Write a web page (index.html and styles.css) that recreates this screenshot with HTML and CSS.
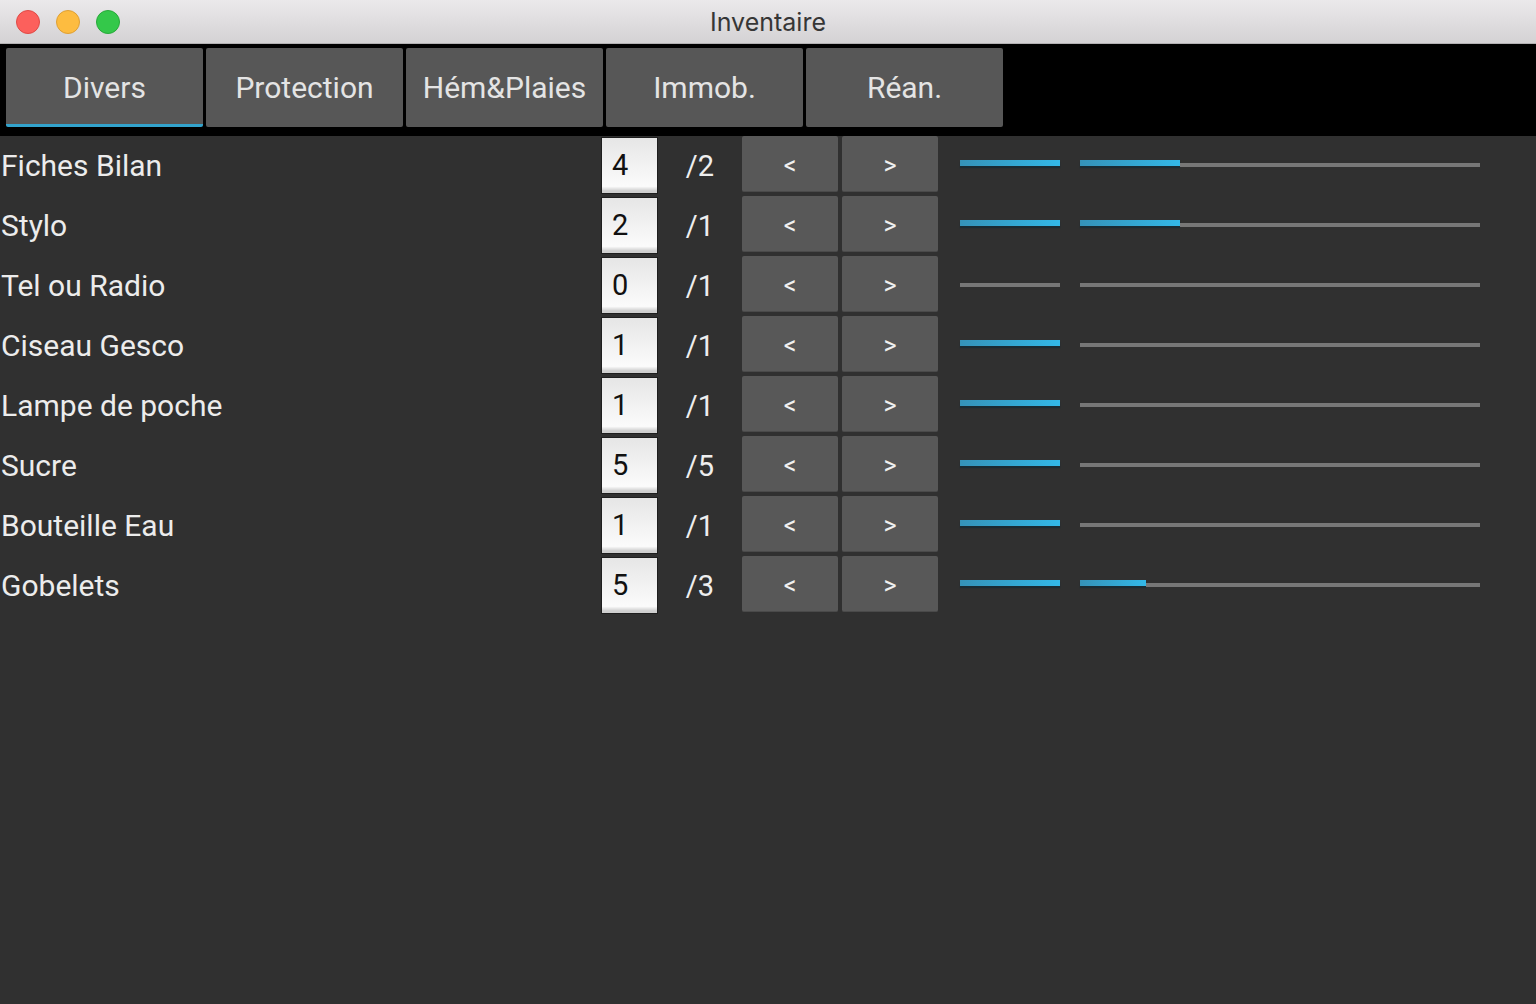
FILE: index.html
```html
<!DOCTYPE html>
<html lang="fr">
<head>
<meta charset="utf-8">
<title>Inventaire</title>
<link rel="stylesheet" href="styles.css">
</head>
<body>
<div class="window">
  <header class="titlebar">
    <div class="lights">
      <span class="light red"></span>
      <span class="light yellow"></span>
      <span class="light green"></span>
    </div>
    <div class="title">Inventaire</div>
  </header>
  <nav class="tabs">
    <div class="tab active">Divers</div>
    <div class="tab">Protection</div>
    <div class="tab">Hém&amp;Plaies</div>
    <div class="tab">Immob.</div>
    <div class="tab">Réan.</div>
  </nav>
  <main class="panel">
    <div class="row">
      <div class="label">Fiches Bilan</div>
      <div class="qty">4</div>
      <div class="max">/2</div>
      <div class="btn">&lt;</div>
      <div class="btn">&gt;</div>
      <div class="slider short"><div class="fill" style="width:100px"></div><div class="rest"></div></div>
      <div class="slider long"><div class="fill" style="width:100px"></div><div class="rest"></div></div>
    </div>
    <div class="row">
      <div class="label">Stylo</div>
      <div class="qty">2</div>
      <div class="max">/1</div>
      <div class="btn">&lt;</div>
      <div class="btn">&gt;</div>
      <div class="slider short"><div class="fill" style="width:100px"></div><div class="rest"></div></div>
      <div class="slider long"><div class="fill" style="width:100px"></div><div class="rest"></div></div>
    </div>
    <div class="row">
      <div class="label">Tel ou Radio</div>
      <div class="qty">0</div>
      <div class="max">/1</div>
      <div class="btn">&lt;</div>
      <div class="btn">&gt;</div>
      <div class="slider short"><div class="fill" style="width:0px"></div><div class="rest"></div></div>
      <div class="slider long"><div class="fill" style="width:0px"></div><div class="rest"></div></div>
    </div>
    <div class="row">
      <div class="label">Ciseau Gesco</div>
      <div class="qty">1</div>
      <div class="max">/1</div>
      <div class="btn">&lt;</div>
      <div class="btn">&gt;</div>
      <div class="slider short"><div class="fill" style="width:100px"></div><div class="rest"></div></div>
      <div class="slider long"><div class="fill" style="width:0px"></div><div class="rest"></div></div>
    </div>
    <div class="row">
      <div class="label">Lampe de poche</div>
      <div class="qty">1</div>
      <div class="max">/1</div>
      <div class="btn">&lt;</div>
      <div class="btn">&gt;</div>
      <div class="slider short"><div class="fill" style="width:100px"></div><div class="rest"></div></div>
      <div class="slider long"><div class="fill" style="width:0px"></div><div class="rest"></div></div>
    </div>
    <div class="row">
      <div class="label">Sucre</div>
      <div class="qty">5</div>
      <div class="max">/5</div>
      <div class="btn">&lt;</div>
      <div class="btn">&gt;</div>
      <div class="slider short"><div class="fill" style="width:100px"></div><div class="rest"></div></div>
      <div class="slider long"><div class="fill" style="width:0px"></div><div class="rest"></div></div>
    </div>
    <div class="row">
      <div class="label">Bouteille Eau</div>
      <div class="qty">1</div>
      <div class="max">/1</div>
      <div class="btn">&lt;</div>
      <div class="btn">&gt;</div>
      <div class="slider short"><div class="fill" style="width:100px"></div><div class="rest"></div></div>
      <div class="slider long"><div class="fill" style="width:0px"></div><div class="rest"></div></div>
    </div>
    <div class="row">
      <div class="label">Gobelets</div>
      <div class="qty">5</div>
      <div class="max">/3</div>
      <div class="btn">&lt;</div>
      <div class="btn">&gt;</div>
      <div class="slider short"><div class="fill" style="width:100px"></div><div class="rest"></div></div>
      <div class="slider long"><div class="fill" style="width:66px"></div><div class="rest"></div></div>
    </div>
  </main>
</div>
</body>
</html>
```

FILE: styles.css
```css
* { box-sizing: border-box; }
html, body {
  margin: 0;
  padding: 0;
  height: 100%;
  background: #000;
}
body {
  font-family: Roboto, "Liberation Sans", sans-serif;
  overflow: hidden;
}
.window {
  display: flex;
  flex-direction: column;
  height: 1004px;
  width: 1536px;
}
.titlebar {
  height: 44px;
  flex: 0 0 44px;
  background: linear-gradient(to bottom, #ebe9eb, #d4d2d4);
  border-bottom: 1px solid #b3b1b3;
  display: flex;
  align-items: center;
  position: relative;
}
.lights {
  display: flex;
  gap: 16px;
  padding-left: 16px;
}
.light {
  width: 24px;
  height: 24px;
  border-radius: 50%;
  display: block;
}
.light.red { background: #fc605c; border: 1px solid #e04a46; }
.light.yellow { background: #fdbc40; border: 1px solid #dfa034; }
.light.green { background: #34c84a; border: 1px solid #28a93a; }
.title {
  position: absolute;
  left: 0;
  right: 0;
  top: 0;
  bottom: 0;
  display: flex;
  align-items: center;
  justify-content: center;
  font-family: Inter, "Noto Sans", sans-serif;
  font-size: 25px;
  color: #363636;
  padding-top: 1px;
  pointer-events: none;
}
.tabs {
  flex: 0 0 92px;
  height: 92px;
  background: #000;
  display: flex;
  gap: 3px;
  padding: 4px 0 9px 6px;
}
.tab {
  width: 197px;
  height: 79px;
  background: #575757;
  border-radius: 2px;
  color: #e4e4e4;
  font-size: 30px;
  display: flex;
  align-items: center;
  justify-content: center;
  padding-bottom: 1px;
}
.tab.active {
  border-bottom: 3px solid #33a3cc;
  padding-top: 3px;
}
.panel {
  flex: 1;
  background: #303030;
  display: flex;
  flex-direction: column;
}
.row {
  height: 60px;
  display: flex;
  align-items: flex-start;
}
.label {
  width: 601px;
  height: 60px;
  padding-left: 1px;
  display: flex;
  align-items: center;
  font-size: 30px;
  color: #ececec;
  padding-bottom: 1px;
}
.qty {
  width: 57px;
  height: 57px;
  margin-top: 1px;
  border: 1px solid #1e1e1e;
  background: linear-gradient(to bottom, #e6e6e6, #fbfbfb 88%, #cfcfcf 96%, #cfcfcf);
  color: #111;
  font-size: 29px;
  display: flex;
  align-items: center;
  padding-left: 10px;
  padding-bottom: 1px;
}
.max {
  width: 84px;
  height: 60px;
  display: flex;
  align-items: center;
  justify-content: center;
  color: #eeeeee;
  font-size: 29px;
  padding-bottom: 1px;
}
.btn {
  width: 96px;
  height: 56px;
  margin-right: 4px;
  background: #585858;
  border-bottom: 1px solid #4a4a4a;
  border-radius: 2px;
  color: #f0f0f0;
  font-size: 25px;
  display: flex;
  align-items: center;
  justify-content: center;
  padding-top: 4px;
}
.slider {
  display: flex;
  align-items: flex-start;
  margin-top: 24px;
  height: 8px;
}
.slider.short {
  width: 100px;
  margin-left: 18px;
}
.slider.long {
  width: 400px;
  margin-left: 20px;
}
.fill {
  flex: 0 0 auto;
  height: 6px;
  background: linear-gradient(to right, #3592b8, #33b8e8);
  box-shadow: 0 2px 1px rgba(10, 40, 55, 0.55);
}
.rest {
  flex: 1;
  height: 4px;
  margin-top: 3px;
  background: #777777;
}
```
